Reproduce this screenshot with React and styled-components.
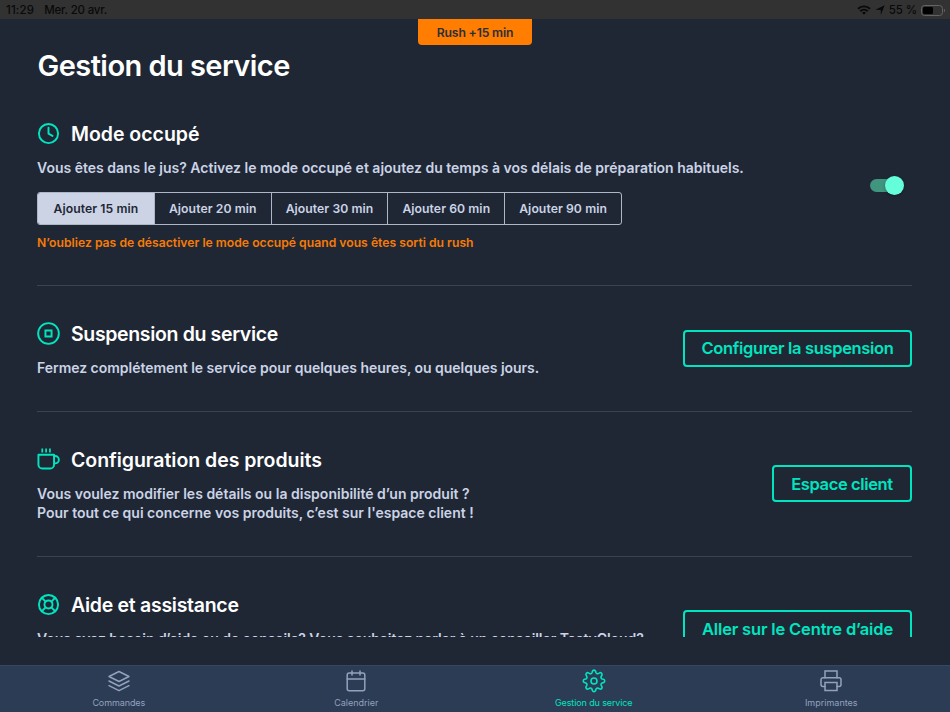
import React from 'react';
import styled, { createGlobalStyle } from 'styled-components';

const GlobalStyle = createGlobalStyle`
  * {
    box-sizing: border-box;
  }
  body {
    margin: 0;
    background: #1f2735;
    font-family: Inter, 'Liberation Sans', sans-serif;
    overflow: hidden;
  }
`;

const Screen = styled.div`
  display: flex;
  flex-direction: column;
  align-items: stretch;
  width: 950px;
  height: 712px;
  background: #1f2735;
  color: #fff;
`;

const StatusBar = styled.header`
  display: flex;
  justify-content: space-between;
  align-items: center;
  flex: none;
  height: 19px;
  padding: 1px 4px 0 6px;
  background: #323232;
  color: #090909;
  font-size: 11.5px;
  font-weight: 500;
`;

const StatusGroup = styled.div`
  display: flex;
  align-items: center;
  gap: ${(props) => props.$gap}px;
  svg {
    display: block;
  }
`;

const StatusText = styled.span`
  white-space: nowrap;
  letter-spacing: ${(props) => props.$spacing || 0}px;
`;

const RushBadge = styled.div`
  flex: none;
  align-self: center;
  width: 114px;
  height: 26px;
  border-radius: 0 0 4px 4px;
  background: #ff7d00;
  color: #2b2f38;
  font-size: 12.2px;
  font-weight: 600;
  line-height: 27px;
  letter-spacing: -0.15px;
  text-align: center;
  white-space: nowrap;
`;

const Title = styled.h1`
  flex: none;
  margin: 2px 37.5px 0;
  font-size: 29px;
  font-weight: 600;
  line-height: 38px;
  letter-spacing: -0.55px;
`;

const Content = styled.main`
  flex: none;
  height: 552px;
  padding: 1px 38px 0 37px;
  overflow: hidden;
`;

const Section = styled.section`
  display: flex;
  justify-content: space-between;
  align-items: center;
  padding: 35px 0 34px;
  & + & {
    border-top: 1px solid #3a4353;
  }
`;

const Heading = styled.h2`
  display: flex;
  align-items: center;
  gap: 11px;
  height: 26px;
  margin: 0 0 11px;
  font-size: 19.5px;
  font-weight: 600;
  letter-spacing: ${(props) => props.$spacing || 0}px;
  white-space: nowrap;
  svg {
    flex: none;
    margin-bottom: 2px;
    color: #00e5c0;
  }
`;

const Text = styled.p`
  min-height: ${(props) => (props.$lines || 1) * 19}px;
  margin: 0;
  color: #cbd3e5;
  font-size: 14px;
  font-weight: 600;
  line-height: 19px;
  letter-spacing: ${(props) => props.$spacing || 0}px;
  white-space: nowrap;
`;

const DelayGroup = styled.div`
  display: flex;
  width: 585px;
  height: 33px;
  margin-top: 15px;
  border: 1px solid #aeb7c8;
  border-radius: 3px;
  overflow: hidden;
`;

const DelayButton = styled.button`
  flex: 1;
  padding: 0;
  border: 0;
  background: ${(props) => (props.$active ? '#cbd3e5' : 'transparent')};
  color: ${(props) => (props.$active ? '#1f2735' : '#cbd3e5')};
  font: 600 12.2px Inter, sans-serif;
  letter-spacing: 0.07px;
  white-space: nowrap;
  & + & {
    border-left: 1px solid #aeb7c8;
  }
`;

const Warning = styled.p`
  margin: 10px 0 0;
  color: #f77b05;
  font-size: 12.2px;
  font-weight: 600;
  line-height: 16px;
  white-space: nowrap;
`;

const SwitchTrack = styled.div`
  display: flex;
  justify-content: flex-end;
  align-items: center;
  width: 31px;
  height: 13px;
  margin: 0 11px 2px 0;
  border-radius: 7px;
  background: #40957f;
`;

const SwitchThumb = styled.span`
  flex: none;
  width: 19px;
  height: 19px;
  margin-right: -3px;
  border-radius: 50%;
  background: #64ffda;
  box-shadow: 0 1px 3px rgba(0, 0, 0, 0.3);
`;

const OutlineButton = styled.button`
  flex: none;
  width: ${(props) => props.$width}px;
  height: 37px;
  margin: 0 0 2px;
  padding: 0;
  border: 2px solid #00e5c0;
  border-radius: 4px;
  background: transparent;
  color: #00e5c0;
  font: 600 16.5px Inter, sans-serif;
  letter-spacing: ${(props) => props.$spacing || 0}px;
  white-space: nowrap;
`;

const TabBar = styled.nav`
  display: grid;
  grid-template-columns: repeat(4, 1fr);
  flex: none;
  height: 47px;
  margin-top: auto;
  border-top: 1px solid #344766;
  background: #2c3c55;
`;

const Tab = styled.a`
  display: flex;
  flex-direction: column;
  align-items: center;
  padding-top: 3px;
  color: ${(props) => (props.$active ? '#00e5c0' : '#93a1bd')};
  font-size: 9px;
  line-height: 12px;
  letter-spacing: ${(props) => props.$spacing || 0}px;
  svg {
    margin-bottom: 4px;
  }
`;

const Icon = ({ size = 24, stroke = 2, children }) => (
  <svg
    width={size}
    height={size}
    viewBox="0 0 24 24"
    fill="none"
    stroke="currentColor"
    strokeWidth={stroke}
    strokeLinecap="round"
    strokeLinejoin="round"
    overflow="visible"
  >
    {children}
  </svg>
);

const ClockIcon = () => (
  <Icon size={23}>
    <circle cx="12" cy="12" r="10" />
    <path d="M12 6v6.2l4.2 2.3" />
  </Icon>
);

const StopIcon = () => (
  <Icon size={23}>
    <circle cx="12" cy="12" r="10.8" />
    <path d="M8.8 8.8h6.4v6.4H8.8z" strokeLinejoin="miter" />
  </Icon>
);

const CupIcon = () => (
  <Icon size={23}>
    <path d="M1.5 7h16.3v10.4a4 4 0 0 1-4 4H5.5a4 4 0 0 1-4-4z" />
    <path d="M17.8 8.4h1.2a3.8 3.8 0 0 1 0 7.6h-1.2" />
    <path d="M5.5.4v4.2M9.5.4v4.2M13.5.4v4.2" strokeLinecap="butt" strokeWidth="1.8" />
  </Icon>
);

const LifebuoyIcon = () => (
  <Icon size={23}>
    <circle cx="12" cy="12" r="10" />
    <circle cx="12" cy="12" r="4.2" />
    <path d="M4.9 4.9l4.1 4.1M15 15l4.1 4.1M15 9l4.1-4.1M4.9 19.1L9 15" />
  </Icon>
);

const LayersIcon = () => (
  <Icon stroke={1.5}>
    <path d="M12 2.5L2 7.5l10 5 10-5z" />
    <path d="M2 12l10 5 10-5" />
    <path d="M2 16.7l10 5 10-5" />
  </Icon>
);

const CalendarIcon = () => (
  <Icon stroke={1.5}>
    <rect x="3.2" y="4" width="17.6" height="17.7" rx="2" />
    <path d="M3.2 10h17.6M8 2v4M16 2v4" />
  </Icon>
);

const GearIcon = () => (
  <Icon stroke={1.6}>
    <circle cx="12" cy="12" r="3" />
    <path d="M10.4 2.3a1.7 1.7 0 0 1 3.2 0l.4 1.4a1.7 1.7 0 0 0 2.3.9l1.3-.7a1.7 1.7 0 0 1 2.3 2.3l-.7 1.3a1.7 1.7 0 0 0 .9 2.4l1.5.4a1.7 1.7 0 0 1 0 3.2l-1.4.5a1.7 1.7 0 0 0-1 2.3l.7 1.3a1.7 1.7 0 0 1-2.3 2.3l-1.3-.7a1.7 1.7 0 0 0-2.3 1l-.4 1.4a1.7 1.7 0 0 1-3.2 0l-.4-1.4a1.7 1.7 0 0 0-2.3-1l-1.3.7a1.7 1.7 0 0 1-2.3-2.3l.7-1.3a1.7 1.7 0 0 0-1-2.3l-1.4-.5a1.7 1.7 0 0 1 0-3.2l1.4-.4a1.7 1.7 0 0 0 1-2.4l-.7-1.3a1.7 1.7 0 0 1 2.3-2.3l1.3.7a1.7 1.7 0 0 0 2.3-.9z" />
  </Icon>
);

const PrinterIcon = () => (
  <Icon stroke={1.5}>
    <path d="M6 8.7V2h12v6.7" strokeLinejoin="miter" />
    <path d="M6 17.5H4a2 2 0 0 1-2-2v-4.8a2 2 0 0 1 2-2h16a2 2 0 0 1 2 2v4.8a2 2 0 0 1-2 2h-2" />
    <path d="M6 13.5h12v8H6z" strokeLinejoin="miter" />
  </Icon>
);

const WifiIcon = () => (
  <svg width="14" height="10" viewBox="0 0 14 10" fill="none" stroke="currentColor" strokeWidth="1.9">
    <path d="M1 3.8a8.6 8.6 0 0 1 12 0" />
    <path d="M3.3 6.3a5.3 5.3 0 0 1 7.4 0" />
    <path d="M7 9.7L5.1 7.8a2.7 2.7 0 0 1 3.8 0z" fill="currentColor" stroke="none" />
  </svg>
);

const LocationIcon = () => (
  <svg width="10" height="10" viewBox="0 0 10 10" fill="currentColor">
    <path d="M9.7.3L5.8 9.9V4.9L.3 4.8z" />
  </svg>
);

const BatteryIcon = () => (
  <svg width="25" height="11" viewBox="0 0 25 11">
    <rect x=".5" y=".5" width="21" height="10" rx="3" fill="none" stroke="#646464" />
    <rect x="2" y="2" width="10" height="7" rx="1.2" fill="#000" />
    <path d="M23 3.8c1.4.4 1.4 3 0 3.4z" fill="#646464" />
  </svg>
);

const delays = [15, 20, 30, 60, 90];

const App = () => (
  <>
    <GlobalStyle />
    <Screen>
      <StatusBar>
        <StatusGroup $gap={10}>
          <StatusText $spacing={0.15}>11:29</StatusText>
          <StatusText $spacing={-0.18}>Mer. 20 avr.</StatusText>
        </StatusGroup>
        <StatusGroup $gap={4}>
          <WifiIcon />
          <LocationIcon />
          <StatusText $spacing={-0.1}>55 %</StatusText>
          <BatteryIcon />
        </StatusGroup>
      </StatusBar>
      <RushBadge>Rush +15 min</RushBadge>
      <Title>Gestion du service</Title>
      <Content>
        <Section>
          <div>
            <Heading $spacing={-0.02}>
              <ClockIcon />
              Mode occupé
            </Heading>
            <Text>
              Vous êtes dans le jus? Activez le mode occupé et ajoutez du temps à vos délais de préparation habituels.
            </Text>
            <DelayGroup>
              {delays.map((delay) => (
                <DelayButton key={delay} $active={delay === 15}>
                  Ajouter {delay} min
                </DelayButton>
              ))}
            </DelayGroup>
            <Warning>N’oubliez pas de désactiver le mode occupé quand vous êtes sorti du rush</Warning>
          </div>
          <SwitchTrack>
            <SwitchThumb />
          </SwitchTrack>
        </Section>
        <Section>
          <div>
            <Heading $spacing={-0.35}>
              <StopIcon />
              Suspension du service
            </Heading>
            <Text $spacing={-0.03}>Fermez complétement le service pour quelques heures, ou quelques jours.</Text>
          </div>
          <OutlineButton $width={229} $spacing={-0.33}>
            Configurer la suspension
          </OutlineButton>
        </Section>
        <Section>
          <div>
            <Heading $spacing={-0.04}>
              <CupIcon />
              Configuration des produits
            </Heading>
            <Text $lines={2} $spacing={0.01}>
              Vous voulez modifier les détails ou la disponibilité d’un produit ?
              <br />
              Pour tout ce qui concerne vos produits, c’est sur l'espace client !
            </Text>
          </div>
          <OutlineButton $width={140} $spacing={-0.37}>
            Espace client
          </OutlineButton>
        </Section>
        <Section>
          <div>
            <Heading $spacing={-0.28}>
              <LifebuoyIcon />
              Aide et assistance
            </Heading>
            <Text $lines={2} $spacing={-0.06}>
              Vous avez besoin d’aide ou de conseils? Vous souhaitez parler à un conseiller TastyCloud?
            </Text>
          </div>
          <OutlineButton $width={229} $spacing={-0.16}>
            Aller sur le Centre d’aide
          </OutlineButton>
        </Section>
      </Content>
      <TabBar>
        <Tab $spacing={-0.1}>
          <LayersIcon />
          Commandes
        </Tab>
        <Tab>
          <CalendarIcon />
          Calendrier
        </Tab>
        <Tab $active $spacing={-0.12}>
          <GearIcon />
          Gestion du service
        </Tab>
        <Tab>
          <PrinterIcon />
          Imprimantes
        </Tab>
      </TabBar>
    </Screen>
  </>
);

export default App;
